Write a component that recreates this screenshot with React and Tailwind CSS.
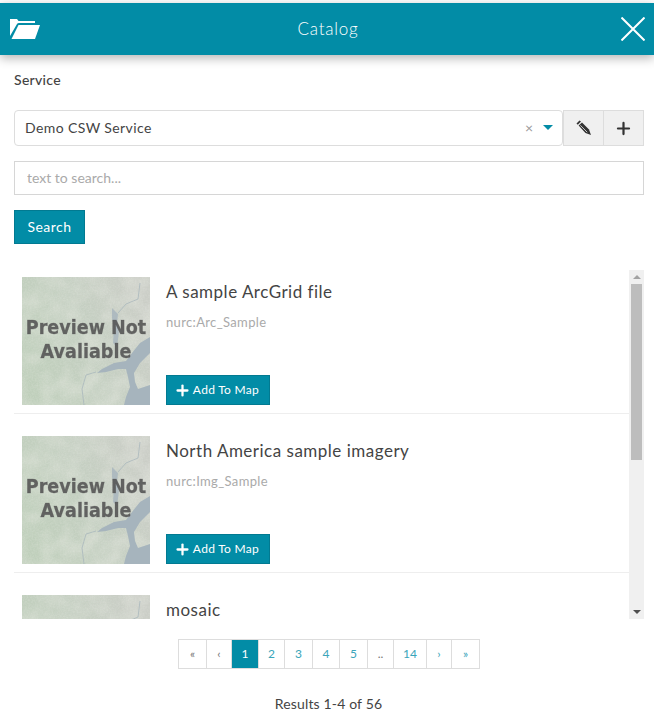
import { Plus } from "lucide-react";

const records = [
  { title: "A sample ArcGrid file", name: "nurc:Arc_Sample", first: true },
  { title: "North America sample imagery", name: "nurc:Img_Sample" },
  { title: "mosaic", name: "nurc:mosaic" },
];

const pages = [
  { label: "«", w: "w-[29px]", muted: true },
  { label: "‹", w: "w-[25px]", muted: true },
  { label: "1", w: "w-[27px]", active: true },
  { label: "2", w: "w-[26px]" },
  { label: "3", w: "w-[28px]" },
  { label: "4", w: "w-[27px]" },
  { label: "5", w: "w-[28px]" },
  { label: "..", w: "w-[26px]", muted: true },
  { label: "14", w: "w-[33px]" },
  { label: "›", w: "w-[25px]" },
  { label: "»", w: "w-[28px]" },
];

function FolderIcon() {
  return (
    <svg width="30" height="20" viewBox="0 0 30 20" fill="#fff">
      <path d="M0 0H7L8.5 2H25V4H9Q7.5 4 7 5L0 17Z" />
      <path d="M8.5 6H30L25 20H1.5Z" />
    </svg>
  );
}

function PencilIcon() {
  return (
    <svg width="16" height="16" viewBox="0 0 16 16" fill="#333">
      <path d="M0.5 3.5L3.5 0.5L5 1.5L1.8 4.8Z" />
      <path d="M2.6 5.6L6 2.4L13 9.5L15 15L9.5 13Z" />
      <path d="M4.4 5.3L11.2 12.2" stroke="#f0f0f0" strokeWidth="0.8" />
    </svg>
  );
}

function Thumbnail() {
  return (
    <svg width="128" height="128" viewBox="0 0 128 128" className="block shrink-0">
      <defs>
        <linearGradient id="mapBase" x1="0" y1="0.7" x2="1" y2="0.3">
          <stop offset="0" stopColor="#bfcfbb" />
          <stop offset="0.5" stopColor="#c4cfc1" />
          <stop offset="1" stopColor="#cbcec7" />
        </linearGradient>
        <filter id="mapPatches" x="0" y="0" width="100%" height="100%">
          <feTurbulence type="fractalNoise" baseFrequency="0.05" numOctaves="2" seed="9" />
          <feColorMatrix values="0 0 0 0 0.78  0 0 0 0 0.8  0 0 0 0 0.74  1.6 0 0 0 -0.55" />
        </filter>
        <filter id="mapNoise" x="0" y="0" width="100%" height="100%">
          <feTurbulence type="fractalNoise" baseFrequency="0.6" numOctaves="2" seed="4" />
          <feColorMatrix values="0 0 0 0 0.93  0 0 0 0 0.93  0 0 0 0 0.9  0.9 0 0 0 -0.3" />
        </filter>
        <filter id="softText" x="-5%" y="-5%" width="110%" height="110%">
          <feGaussianBlur stdDeviation="0.55" />
        </filter>
        <filter id="softMap">
          <feGaussianBlur stdDeviation="0.45" />
        </filter>
      </defs>
      <rect width="128" height="128" fill="url(#mapBase)" />
      <rect width="128" height="128" filter="url(#mapPatches)" opacity="0.6" />
      <rect width="128" height="128" filter="url(#mapNoise)" opacity="0.35" />
      <g filter="url(#softMap)">
        <g fill="#a6b4bd">
          <path d="M128 60L118 66L110 76L104 84L92 86L80 92L75 96L84 95L96 92L104 92L106 100L108 110L104 120L102 128H128V108L116 112L113 105L112 96L118 86L128 76Z" />
          <path d="M90 31L96 37L95 47L97 55L95 70L91 66L92 50L90 41Z" opacity="0.8" />
        </g>
        <g fill="none" stroke="#a9b7bc" strokeWidth="0.8">
          <path d="M96 36L104 27L116 22L118 6" />
          <path d="M74 95L64 98L60 112L62 128" />
        </g>
      </g>
      {/* stretched a bit: the preview text in the image is taller than it is wide */}
      <g
        filter="url(#softText)"
        transform="scale(1 1.15)"
        fill="#555"
        fillOpacity="0.9"
        stroke="#555"
        strokeOpacity="0.5"
        strokeWidth="0.4"
        fontFamily="'DejaVu Sans', sans-serif"
        fontWeight="700"
        fontSize="17.6"
        textAnchor="middle"
      >
        <text x="64" y="49.6">Preview Not</text>
        <text x="64" y="70.4">Avaliable</text>
      </g>
    </svg>
  );
}

function RecordRow({ record }) {
  return (
    <div className={`flex gap-4 px-2 pb-2 border-b border-[#eeeeee] ${record.first ? "pt-[7px]" : "pt-[22px]"}`}>
      <Thumbnail />
      <div className="flex flex-col flex-1 h-[128px]">
        <h4 className="text-[17px] leading-[30px] text-[#444] tracking-[0.5px]">{record.title}</h4>
        <p className="mt-[5px] text-[13px] leading-[20px] text-[#aaaaaa] tracking-[0.35px]">{record.name}</p>
        <button className="mt-auto flex items-center justify-center gap-[2px] w-[104px] h-[30px] pr-[3px] bg-[#028ca6] border border-[#027a91] text-white text-[12px] tracking-[0.3px]">
          <Plus size={17} strokeWidth={3.2} />
          Add To Map
        </button>
      </div>
    </div>
  );
}

function Scrollbar() {
  return (
    <div className="relative w-[15px] shrink-0 bg-[#f0f0f0]">
      <div className="absolute left-[4px] top-[5px] w-0 h-0 border-x-[4px] border-x-transparent border-b-[4px] border-b-[#a3a3a3]" />
      <div className="absolute left-[2px] top-[14px] w-[11px] h-[176px] bg-[#bdbdbd]" />
      <div className="absolute left-[4px] bottom-[5px] w-0 h-0 border-x-[4px] border-x-transparent border-t-[4px] border-t-[#505050]" />
    </div>
  );
}

export default function App() {
  return (
    <div className="w-[654px] h-[713px] bg-white overflow-hidden pt-[3px] text-[#444] font-['Lato','Open_Sans',sans-serif]">
      <header className="relative flex items-center justify-between h-[52px] pl-[10px] pr-[9px] bg-[#028ca6] shadow-[0_3px_10px_rgba(0,0,0,0.3)]">
        <FolderIcon />
        <span className="absolute left-[2px] right-0 text-center text-[17px] text-white font-light tracking-[0.8px]">Catalog</span>
        <svg width="24" height="24" viewBox="0 0 24 24" stroke="#fff" strokeWidth="2">
          <path d="M0.5 0.5L23.5 23.5M23.5 0.5L0.5 23.5" />
        </svg>
      </header>

      <div className="pl-[14px] pr-[10px]">
        <label className="block mt-[15px] text-[14px] leading-[20px] font-medium tracking-[0.3px] text-[#444]">Service</label>

        <div className="flex mt-[20px] h-[36px]">
          <div className="flex items-center flex-1 pl-[10px] pr-[9px] pb-[1px] border border-[#dddddd] rounded-[4px] text-[14px] text-[#444]">
            <span className="flex-1 tracking-[0.4px]">Demo CSW Service</span>
            <span className="text-[#999] text-[14px] leading-none">×</span>
            <span className="ml-[10px] w-0 h-0 border-x-[5px] border-x-transparent border-t-[5px] border-t-[#028ca6]" />
          </div>
          <button className="flex items-center justify-center w-[41px] bg-[#f0f0f0] border border-[#dddddd]">
            <PencilIcon />
          </button>
          <button className="flex items-center justify-center w-[40px] border border-l-0 bg-[#f0f0f0] border-[#dddddd] text-[#333]">
            <Plus size={19} strokeWidth={2.8} />
          </button>
        </div>

        <input
          className="block w-full h-[34px] mt-[15px] px-[12px] pb-[2px] border border-[#d6d6d6] text-[14px] placeholder:text-[#aaaaaa] outline-none"
          placeholder="text to search..."
        />

        <button className="block mt-[15px] w-[71px] h-[34px] pb-[2px] bg-[#028ca6] border border-[#027a91] text-white text-[14px] tracking-[0.5px]">
          Search
        </button>

        <div className="flex h-[349px] mt-[26px] overflow-hidden">
          <div className="flex-1 overflow-hidden">
            {records.map((r) => (
              <RecordRow key={r.name} record={r} />
            ))}
          </div>
          <Scrollbar />
        </div>

        <nav className="flex justify-center mt-[20px]">
          {pages.map((p) => (
            <span
              key={p.label}
              className={`flex items-center justify-center h-[30px] border border-l-0 first:border-l border-[#dddddd] text-[12px] ${p.w} ${
                p.active ? "bg-[#028ca6] border-[#028ca6] text-white" : p.muted ? "text-[#777]" : "text-[#3aa5ba]"
              }`}
            >
              {p.label}
            </span>
          ))}
        </nav>

        <p className="mt-[25px] pr-[1px] text-center text-[14px] leading-[20px] tracking-[0.15px] text-[#444]">Results 1-4 of 56</p>
      </div>
    </div>
  );
}
